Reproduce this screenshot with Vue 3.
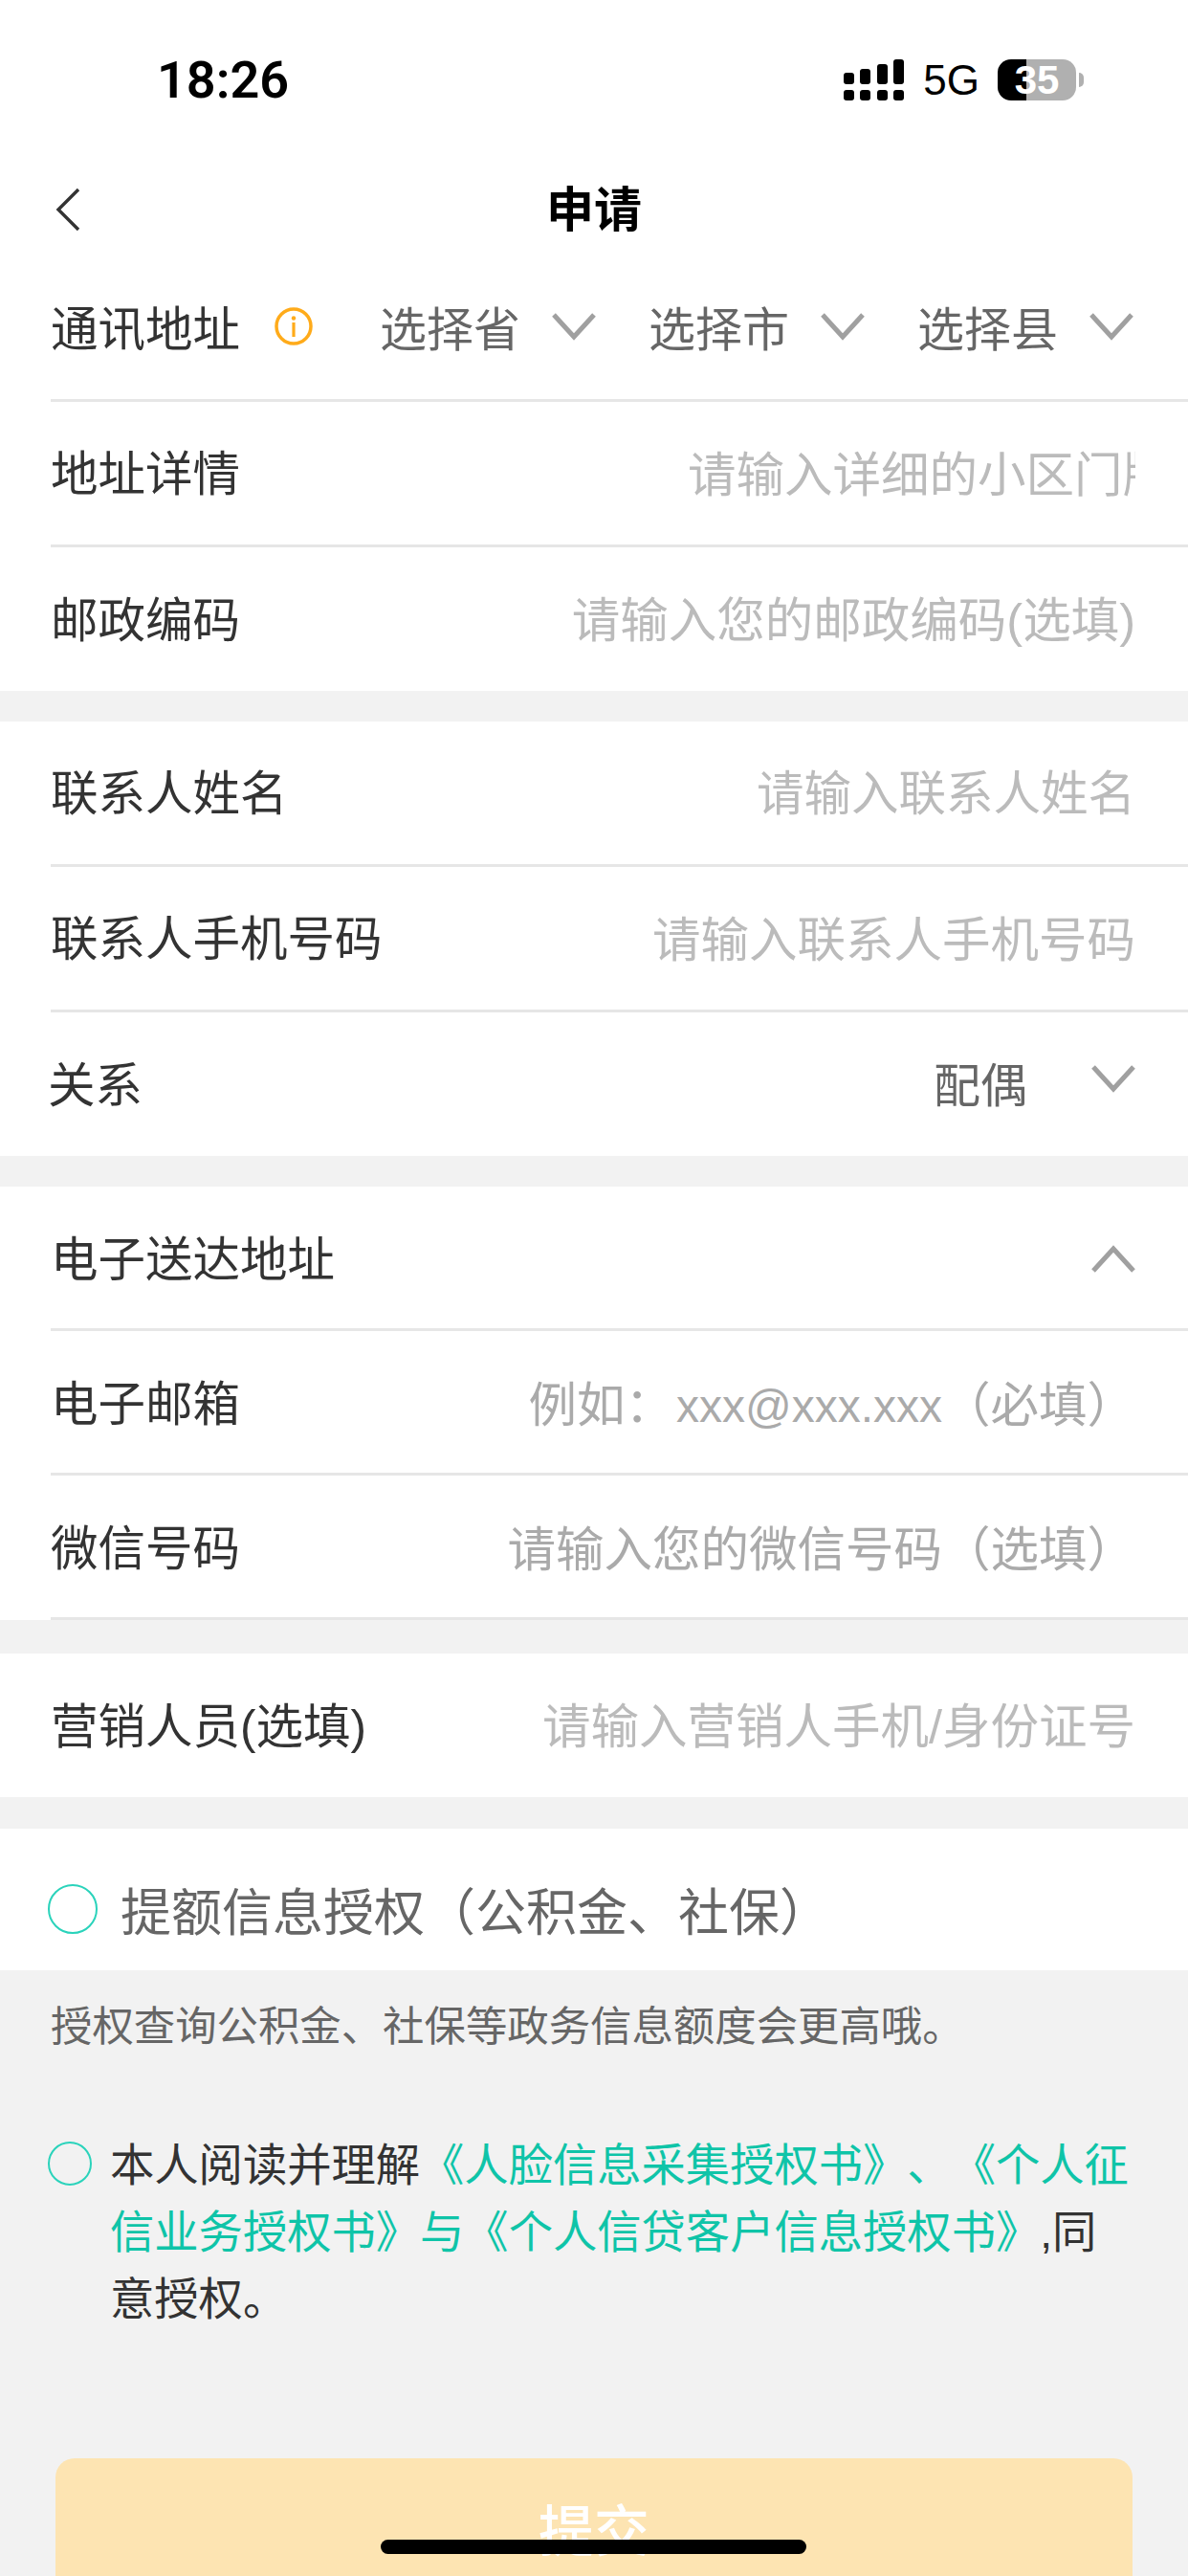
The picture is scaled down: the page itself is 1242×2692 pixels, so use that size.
<script setup>
const areas = ['选择省', '选择市', '选择县'];
</script>

<template>
  <div class="page">
    <!-- status bar -->
    <div class="status">
      <span class="time">18:26</span>
      <div class="status-right">
        <svg class="signal" width="63" height="43" viewBox="0 0 63 43" fill="#000">
          <rect x="0" y="14" width="11" height="12" rx="3" />
          <rect x="17" y="10" width="11" height="16" rx="3" />
          <rect x="35" y="5" width="11" height="21" rx="3" />
          <rect x="52" y="0" width="11" height="26" rx="3" />
          <rect x="0" y="32" width="11" height="11" rx="3" />
          <rect x="17" y="32" width="11" height="11" rx="3" />
          <rect x="35" y="32" width="11" height="11" rx="3" />
          <rect x="52" y="32" width="11" height="11" rx="3" />
        </svg>
        <span class="net">5G</span>
        <div class="battery"><span>35</span></div>
        <i class="nub"></i>
      </div>
    </div>

    <!-- nav -->
    <div class="nav">
      <svg class="back" width="26" height="46" viewBox="0 0 26 46" fill="none">
        <path d="M24 2 3 23l21 21" stroke="#333" stroke-width="3.4" />
      </svg>
      <span class="title">申请</span>
    </div>

    <div class="group first">
      <div class="row addr">
        <span class="label">通讯地址</span>
        <svg class="info" width="40" height="40" viewBox="0 0 40 40" fill="none">
          <circle cx="20" cy="20" r="18" stroke="#ffab1a" stroke-width="3.5" />
          <circle cx="20" cy="11.5" r="2.2" fill="#ffab1a" />
          <rect x="18.4" y="16" width="3.2" height="15" fill="#ffab1a" />
        </svg>
        <div class="areas">
          <div v-for="a in areas" :key="a" class="area">
            <span class="val">{{ a }}</span>
            <svg class="chev" width="46" height="30" viewBox="0 0 46 30" fill="none">
              <path d="M2 3 23 26 44 3" stroke="#a0a0a0" stroke-width="5" />
            </svg>
          </div>
        </div>
      </div>
      <div class="row">
        <span class="label">地址详情</span>
        <div class="clip"><span class="hint">请输入详细的小区门牌号</span></div>
      </div>
      <div class="row last">
        <span class="label">邮政编码</span>
        <span class="hint">请输入您的邮政编码(选填)</span>
      </div>
    </div>

    <div class="group">
      <div class="row">
        <span class="label">联系人姓名</span>
        <span class="hint name">请输入联系人姓名</span>
      </div>
      <div class="row">
        <span class="label">联系人手机号码</span>
        <span class="hint">请输入联系人手机号码</span>
      </div>
      <div class="row last relation">
        <span class="label">关系</span>
        <div class="pick">
          <span class="val">配偶</span>
          <svg class="chev up-shift" width="46" height="30" viewBox="0 0 46 30" fill="none">
            <path d="M2 3 23 26 44 3" stroke="#a0a0a0" stroke-width="5" />
          </svg>
        </div>
      </div>
    </div>

    <div class="group tight">
      <div class="row">
        <span class="label">电子送达地址</span>
        <svg class="chev down-shift" width="46" height="30" viewBox="0 0 46 30" fill="none">
          <path d="M2 27 23 4 44 27" stroke="#a0a0a0" stroke-width="5" />
        </svg>
      </div>
      <div class="row">
        <span class="label">电子邮箱</span>
        <span class="hint dark">例如：<span class="latin">xxx@xxx.xxx</span>（必填）</span>
      </div>
      <div class="row">
        <span class="label">微信号码</span>
        <span class="hint dark">请输入您的微信号码（选填）</span>
      </div>
    </div>

    <div class="group sales">
      <div class="row last">
        <span class="label">营销人员(选填)</span>
        <span class="hint">请输入营销人手机/身份证号</span>
      </div>
    </div>

    <div class="group auth">
      <i class="radio big"></i>
      <span class="auth-text">提额信息授权（公积金、社保）</span>
    </div>
    <p class="note">授权查询公积金、社保等政务信息额度会更高哦。</p>

    <div class="agree">
      <i class="radio"></i>
      <p>本人阅读并理解<em>《人脸信息采集授权书》、《个人征信业务授权书》与《个人信贷客户信息授权书》</em>,同意授权。</p>
    </div>

    <button class="submit">提交</button>
    <div class="home"></div>
  </div>
</template>

<style scoped>
.page {
  position: relative;
  width: 1242px;
  height: 2692px;
  overflow: hidden;
  background: #f2f2f2;
  font-family: "Liberation Sans", "Noto Sans CJK SC", sans-serif;
  color: #333;
  text-spacing-trim: space-all;
}

.status {
  height: 166px;
  background: #fff;
  display: flex;
  justify-content: space-between;
  padding: 62px 109px 0 164px;
  box-sizing: border-box;
}
.time { font-family: Roboto, sans-serif; font-size: 54px; font-weight: 600; color: #000; line-height: 44px; }
.status-right { display: flex; align-items: flex-start; height: 43px; position: relative; }
.net { font-size: 44px; line-height: 44px; color: #000; margin-left: 20px; }
.battery {
  width: 82px;
  height: 43px;
  margin-left: 19px;
  border-radius: 14px;
  background: linear-gradient(to right, #000 0 30px, #b0b0b0 30px);
  display: flex;
  align-items: center;
  justify-content: center;
  color: #fff;
  font-size: 42px;
  font-weight: 700;
}
.nub {
  width: 5px;
  height: 15px;
  margin: 14px 0 0 3px;
  border-radius: 0 5px 5px 0;
  background: #b0b0b0;
}

.nav {
  height: 104px;
  padding-bottom: 6px;
  box-sizing: border-box;
  background: #fff;
  display: flex;
  align-items: center;
  justify-content: center;
  position: relative;
}
.back { position: absolute; left: 58px; top: 30px; }
.title { font-size: 50px; font-weight: 700; color: #000; }

.group { background: #fff; padding-left: 53px; margin-bottom: 32px; }
.group.first { margin-top: 0; }
.group.tight { margin-bottom: 35px; }
.group.tight .row { height: 151px; padding-bottom: 3px; }
.group.sales { margin-bottom: 33px; }

.row {
  height: 152px;
  box-sizing: border-box;
  border-bottom: 3px solid #e6e6e6;
  padding-right: 55px;
  padding-bottom: 6px;
  display: flex;
  align-items: center;
  justify-content: space-between;
}
.row.last { border-bottom: 0; height: 150px; }
.row.addr { height: 150px; justify-content: flex-start; padding-right: 0; }

.label { font-size: 49.5px; white-space: nowrap; }
.hint { font-size: 50.5px; color: #bbb; white-space: nowrap; }
.hint.name { font-size: 49.5px; }
.hint.dark { color: #aaa; }
.latin { font-size: 48px; margin-left: 3px; }
.val { font-size: 49px; color: #666; white-space: nowrap; }
.info { margin-left: 36px; flex: none; }
.areas { display: flex; margin-left: 70px; gap: 55px; }
.area { display: flex; align-items: center; gap: 33px; }
.chev { flex: none; }

.clip { width: 468px; overflow: hidden; }

.pick { display: flex; align-items: center; gap: 67px; }
.relation .label { margin-left: -3px; }
.up-shift { margin-top: -6px; }
.down-shift { margin-top: 6px; }

.auth { height: 148px; display: flex; align-items: flex-start; padding-left: 50px; padding-top: 58px; box-sizing: border-box; margin-bottom: 0; }
.radio {
  flex: none;
  width: 46px;
  height: 46px;
  border-radius: 50%;
  border: 2px solid #2ad3bb;
  box-sizing: border-box;
}
.radio.big { width: 52px; height: 52px; margin-right: 24px; }
.auth-text { font-size: 53px; color: #666; line-height: 52px; margin-top: 5px; white-space: nowrap; }

.note { margin: 32px 0 0 53px; font-size: 43.4px; line-height: 54px; color: #666; white-space: nowrap; }

.agree { display: flex; margin: 93px 0 0 50px; }
.agree p { margin: -10px 0 0 19px; width: 1070px; font-size: 46.3px; line-height: 70px; color: #333; }
.agree em { font-style: normal; color: #0fc4a8; }

.submit {
  display: block;
  width: 1126px;
  height: 144px;
  margin: 131px 0 0 58px;
  border: 0;
  border-radius: 20px;
  background: #fde4b2;
  color: #fff;
  font-family: inherit;
  font-size: 58px;
  font-weight: 500;
}

.home {
  position: absolute;
  left: 398px;
  top: 2654px;
  width: 445px;
  height: 15px;
  border-radius: 8px;
  background: #000;
}
</style>

<style>
html, body { margin: 0; padding: 0; background: #f2f2f2; }
</style>
